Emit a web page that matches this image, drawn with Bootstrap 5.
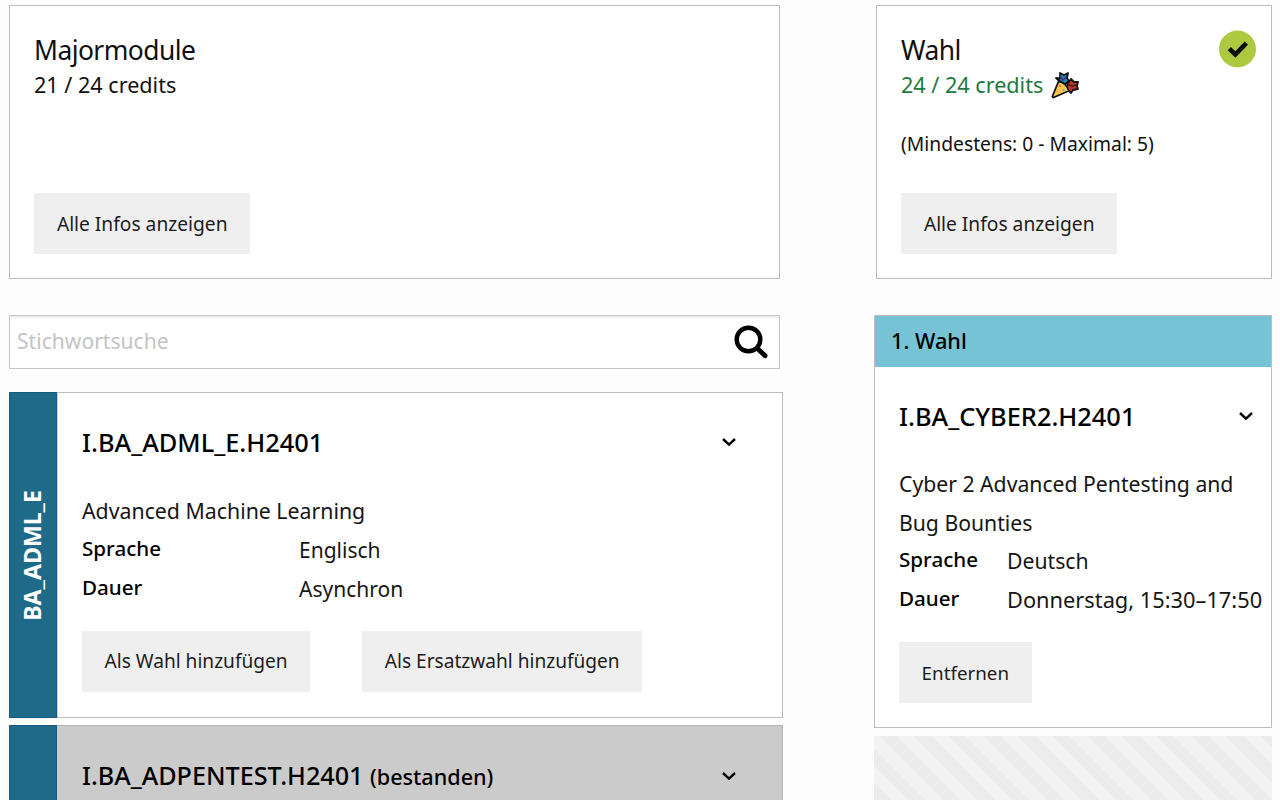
<!DOCTYPE html>
<html lang="de">
<head>
<meta charset="utf-8">
<meta name="viewport" content="width=device-width, initial-scale=1">
<title>Modulwahl</title>
<link href="https://cdn.jsdelivr.net/npm/bootstrap@5.3.0/dist/css/bootstrap.min.css" rel="stylesheet">
<style>
  body { font-family: "Noto Sans", sans-serif; font-size: 21.3px; line-height: 39px; color: #111; background: #fdfdfd; }
  .page { padding: 5px 8px 0 9px; height: 800px; overflow: hidden; }
  .col-modules { width: 774px; }
  .col-choice { width: 398px; }
  .panel { background: #fff; border: 1px solid #bcbcbc; }
  .summary { height: 274px; padding: 28px 24px 24px; position: relative; margin-bottom: 36px; }
  .col-modules .summary, .search { width: 771px; }
  .col-choice .summary { margin-left: 2px; }
  .summary h2 { font-size: 26.4px; line-height: 32px; letter-spacing: -.55px; font-weight: 400; margin: 0; }
  .credits { font-size: 21.6px; line-height: 37px; }
  .credits.done { color: #1d7a3f; }
  .range { font-size: 19.3px; line-height: 24px; margin-top: 29px; }
  .check { position: absolute; right: 15px; top: 23.5px; }
  .btn-flat { --bs-btn-bg: #efefef; --bs-btn-color: #1c1c1c; --bs-btn-border-width: 0; --bs-btn-border-radius: 0; --bs-btn-hover-bg: #e2e2e2; --bs-btn-font-size: 19.1px; --bs-btn-line-height: 61px; --bs-btn-padding-y: 0; --bs-btn-padding-x: 22.6px; white-space: nowrap; }
  .summary .btn-flat { --bs-btn-font-size: 19.2px; --bs-btn-padding-x: 22.9px; }
  .search { height: 54px; margin-bottom: 23px; box-shadow: inset 0 2px 2px #eee; border-color: #c6c6c6; padding: 0 10px 0 7px; }
  .search input { font-size: 21.1px; color: #111; line-height: 30px; outline: 0; margin-top: -2px; }
  .search input::placeholder { color: #c4c4c4; opacity: 1; }
  .module { height: 326px; margin-bottom: 7px; }
  .tag { width: 48px; background: #206a89; border: 1px solid #195a80; color: #fff; }
  .tag span { writing-mode: vertical-rl; transform: rotate(180deg); font-weight: 700; font-size: 23.1px; line-height: 30px; white-space: nowrap; margin-right: 2px; }
  .module-body { border: 1px solid #bcbcbc; border-left-color: #d0d0d0; background: #fff; padding: 34px 45px 0 24px; }
  .passed .module-body { background: #cbcbcb; border-color: #b4b4b4; border-left-color: #cbcbcb; }
  .passed .tag, .passed .module-body { border-bottom: 0; }
  .passed { height: 75px; margin: 0; }
  .code { font-size: 25.4px; line-height: 30px; font-weight: 500; color: #000; margin: 0; white-space: nowrap; }
  .passed .code { font-size: 25.2px; }
  .code small { font-size: 21.6px; font-weight: 500; }
  .facts { color: #151515; margin-top: 34px; }
  .facts dt { font-size: 20.6px; line-height: 36px; font-weight: 500; color: #000; width: 217px; margin: 0; }
  .facts dd { margin: 0; font-size: 21px; line-height: 40px; height: 39px; white-space: nowrap; }
  .actions { gap: 52px; margin-top: 23px; }
  .choice { height: 413px; margin-bottom: 8px; }
  .choice header { height: 51px; background: #77c3d6; font-size: 21.7px; line-height: 50px; font-weight: 500; color: #000; padding-left: 16px; }
  .choice-body { padding: 34px 0 0 24px; }
  .choice .code-row { padding-right: 17px; }
  .choice .facts > div { padding-right: 30px; font-size: 21.2px; }
  .choice .facts dl { margin-top: -1px; }
  .choice .facts { margin-top: 33px; }
  .choice .facts dt { width: 108px; }
  .choice .facts dd { font-size: 21.2px; }
  .choice .facts .time { font-size: 21.8px; }
  .choice .btn-flat { --bs-btn-font-size: 18.8px; --bs-btn-line-height: 62px; height: 61px; }
  .drop { height: 64px; background: repeating-linear-gradient(45deg, #ececec 0 12.25px, #f2f2f2 12.25px 24.5px); }
</style>
</head>
<body>
<svg class="d-none">
  <symbol id="chevron" viewBox="0 0 16 10"><path d="M2 2l6 5.600L14 2" fill="none" stroke="#000" stroke-width="2.4"/></symbol>
</svg>
<main class="page d-flex justify-content-between">
  <section class="col-modules">
    <div class="panel summary d-flex flex-column align-items-start">
      <h2>Majormodule</h2>
      <div class="credits">21 / 24 credits</div>
      <button class="btn btn-flat mt-auto">Alle Infos anzeigen</button>
    </div>
    <div class="panel search d-flex align-items-center">
      <input class="flex-grow-1 border-0 bg-transparent p-0" type="text" placeholder="Stichwortsuche">
      <svg width="36" height="36" viewBox="0 0 36 36"><circle cx="15.5" cy="15.5" r="11.8" fill="none" stroke="#000" stroke-width="4.4"/><path d="M24.5 24.5l7.600 7.300" stroke="#000" stroke-width="4.8" stroke-linecap="round"/></svg>
    </div>
    <article class="module d-flex">
      <div class="tag d-flex align-items-center justify-content-center"><span>BA_ADML_E</span></div>
      <div class="module-body flex-grow-1">
        <div class="code-row d-flex justify-content-between align-items-center">
          <h3 class="code">I.BA_ADML_E.H2401</h3>
          <svg width="16" height="10"><use href="#chevron"/></svg>
        </div>
        <div class="facts">
          <div>Advanced Machine Learning</div>
          <dl class="mb-0">
            <div class="d-flex"><dt>Sprache</dt><dd>Englisch</dd></div>
            <div class="d-flex"><dt>Dauer</dt><dd>Asynchron</dd></div>
          </dl>
        </div>
        <div class="actions d-flex">
          <button class="btn btn-flat">Als Wahl hinzufügen</button>
          <button class="btn btn-flat">Als Ersatzwahl hinzufügen</button>
        </div>
      </div>
    </article>
    <article class="module passed d-flex">
      <div class="tag"></div>
      <div class="module-body flex-grow-1">
        <div class="code-row d-flex justify-content-between align-items-center">
          <h3 class="code">I.BA_ADPENTEST.H2401 <small>(bestanden)</small></h3>
          <svg width="16" height="10"><use href="#chevron"/></svg>
        </div>
      </div>
    </article>
  </section>
  <section class="col-choice">
    <div class="panel summary d-flex flex-column align-items-start">
      <svg class="check" width="38" height="38" viewBox="0 0 38 38"><circle cx="19.5" cy="19" r="18.5" fill="#adc940"/><path d="M11.300 18.700l6 5.800 11-11.400" fill="none" stroke="#0c0c0c" stroke-width="4.6"/></svg>
      <h2>Wahl</h2>
      <div class="credits done d-flex align-items-center">24 / 24 credits
        <svg class="ms-2" width="28" height="28" viewBox="0 0 28 28" stroke-linejoin="round" stroke-linecap="round">
          <path d="M5 7l4 .5L9 2l4 2 4-2-1 5 2 3-5 4z" fill="#2583a8" stroke="#111" stroke-width="1.8"/>
          <path d="M9 5l3 4 3-3" fill="none" stroke="#41307c" stroke-width="1.5"/>
          <path d="M17 12l3-4 3 3 4 0-1 4 1 3-5 1-2 3-5-5z" fill="#b8352c" stroke="#111" stroke-width="1.8"/>
          <path d="M18 14l4 1 3-1" fill="none" stroke="#511c22" stroke-width="1.4"/>
          <path d="M7.500 10.500C12 10.500 17 15 17.500 20L2.500 26.500Q1 26.500 1.500 25z" fill="#fcc650" stroke="#111" stroke-width="1.8"/>
          <circle cx="9" cy="15" r="1" fill="#e2574c"/><circle cx="12.500" cy="19" r="1.100" fill="#58b7a5"/><circle cx="6.500" cy="20.500" r=".8" fill="#e2903c"/>
        </svg>
      </div>
      <div class="range">(Mindestens: 0 - Maximal: 5)</div>
      <button class="btn btn-flat mt-auto">Alle Infos anzeigen</button>
    </div>
    <article class="panel choice">
      <header>1. Wahl</header>
      <div class="choice-body">
        <div class="code-row d-flex justify-content-between align-items-center">
          <h3 class="code">I.BA_CYBER2.H2401</h3>
          <svg width="16" height="10"><use href="#chevron"/></svg>
        </div>
        <div class="facts">
          <div>Cyber 2 Advanced Pentesting and Bug Bounties</div>
          <dl class="mb-0">
            <div class="d-flex"><dt>Sprache</dt><dd>Deutsch</dd></div>
            <div class="d-flex"><dt>Dauer</dt><dd class="time">Donnerstag, 15:30–17:50</dd></div>
          </dl>
        </div>
        <div class="actions d-flex">
          <button class="btn btn-flat">Entfernen</button>
        </div>
      </div>
    </article>
    <div class="drop"></div>
  </section>
</main>
<script src="https://cdn.jsdelivr.net/npm/bootstrap@5.3.0/dist/js/bootstrap.bundle.min.js"></script>
</body>
</html>
